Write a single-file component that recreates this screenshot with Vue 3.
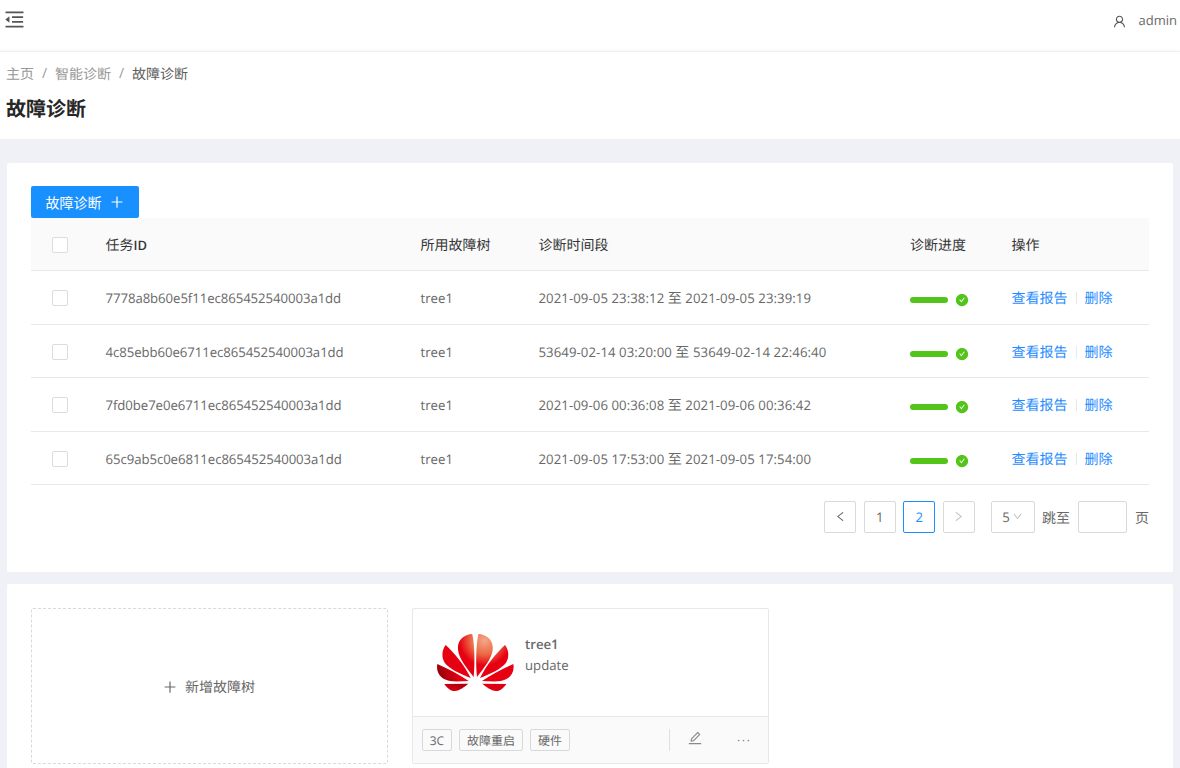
<script setup>
const icons = {
  fold: 'M408 442h480c4.4 0 8-3.6 8-8v-56c0-4.4-3.6-8-8-8H408c-4.4 0-8 3.6-8 8v56c0 4.4 3.6 8 8 8zm-8 204c0 4.4 3.6 8 8 8h480c4.4 0 8-3.6 8-8v-56c0-4.4-3.6-8-8-8H408c-4.4 0-8 3.6-8 8v56zm504-486H120c-4.4 0-8 3.6-8 8v56c0 4.4 3.6 8 8 8h784c4.4 0 8-3.6 8-8v-56c0-4.4-3.6-8-8-8zm0 632H120c-4.4 0-8 3.6-8 8v56c0 4.4 3.6 8 8 8h784c4.4 0 8-3.6 8-8v-56c0-4.4-3.6-8-8-8zM115.4 518.9L271.7 642c5.8 4.6 14.4.5 14.4-6.9V388.9c0-7.4-8.5-11.5-14.4-6.9L115.4 505.1a8.74 8.74 0 0 0 0 13.8z',
  user: 'M858.5 763.6a374 374 0 0 0-80.6-119.5 375.63 375.63 0 0 0-119.5-80.6c-.4-.2-.8-.3-1.2-.5C719.5 518 760 444.7 760 362c0-137-111-248-248-248S264 225 264 362c0 82.7 40.5 156 102.8 201.1-.4.2-.8.3-1.2.5-44.8 18.9-85 46-119.5 80.6a375.63 375.63 0 0 0-80.6 119.5A371.7 371.7 0 0 0 136 901.8a8 8 0 0 0 8 8.2h60c4.4 0 7.9-3.5 8-7.8 2-77.2 33-149.5 87.8-204.3 56.7-56.7 132-87.9 212.2-87.9s155.5 31.2 212.2 87.9C779 752.7 810 825 812 902.2c.1 4.4 3.6 7.8 8 7.8h60a8 8 0 0 0 8-8.2c-1-47.8-10.9-94.3-29.5-138.2zM512 534c-45.9 0-89.1-17.9-121.6-50.4S340 407.9 340 362c0-45.9 17.9-89.1 50.4-121.6S466.1 190 512 190s89.1 17.9 121.6 50.4S684 316.1 684 362c0 45.9-17.9 89.1-50.4 121.6S557.9 534 512 534z',
  left: 'M724 218.3V141c0-6.7-7.7-10.4-12.9-6.3L260.3 486.8a31.86 31.86 0 0 0 0 50.3l450.8 352.1c5.3 4.1 12.9.4 12.9-6.3v-77.3c0-4.9-2.3-9.6-6.1-12.6l-360-281 360-281.1c3.8-3 6.1-7.7 6.1-12.6z',
  right: 'M765.7 486.8L314.9 134.7A7.97 7.97 0 0 0 302 141v77.3c0 4.9 2.3 9.6 6.1 12.6l360 281.1-360 281.1c-3.9 3-6.1 7.7-6.1 12.6V883c0 6.7 7.7 10.4 12.9 6.3l450.8-352.1a31.96 31.96 0 0 0 0-50.4z',
  down: 'M884 256h-75c-5.1 0-9.9 2.5-12.9 6.6L512 654.2 227.9 262.6c-3-4.1-7.8-6.6-12.9-6.6h-75c-6.5 0-10.3 7.4-6.5 12.7l352.6 486.1c12.8 17.6 39 17.6 51.7 0l352.6-486.1c3.9-5.3.1-12.7-6.4-12.7z',
  edit: 'M257.7 752c2 0 4-.2 6-.5L431.9 722c2-.4 3.9-1.3 5.3-2.8l423.9-423.9a9.96 9.96 0 0 0 0-14.1L694.9 114.9c-1.9-1.9-4.4-2.9-7.1-2.9s-5.2 1-7.1 2.9L256.8 538.8c-1.5 1.5-2.4 3.3-2.8 5.3l-29.5 168.2a33.5 33.5 0 0 0 9.4 29.8c6.6 6.4 14.9 9.9 23.8 9.9zm67.4-174.4L687.8 215l73.3 73.3-362.7 362.6-88.9 15.7 15.6-89zM880 836H144c-17.7 0-32 14.3-32 32v36c0 4.4 3.6 8 8 8h784c4.4 0 8-3.6 8-8v-36c0-17.7-14.3-32-32-32z',
  check: 'M512 64C264.6 64 64 264.6 64 512s200.6 448 448 448 448-200.6 448-448S759.4 64 512 64zm193.5 301.7l-210.6 292a31.8 31.8 0 0 1-51.7 0L318.5 484.9c-3.8-5.3 0-12.7 6.5-12.7h46.9c10.2 0 19.9 4.9 25.9 13.3l71.2 98.8 157.2-218c6-8.3 15.6-13.3 25.9-13.3H699c6.5 0 10.3 7.4 6.5 12.7z',
  plus: 'M482 152h60q8 0 8 8v704q0 8-8 8h-60q-8 0-8-8V160q0-8 8-8zM176 474h672q8 0 8 8v60q0 8-8 8H176q-8 0-8-8v-60q0-8 8-8z',
}
const rows = [
  { id: '7778a8b60e5f11ec865452540003a1dd', from: '2021-09-05 23:38:12', to: '2021-09-05 23:39:19' },
  { id: '4c85ebb60e6711ec865452540003a1dd', from: '53649-02-14 03:20:00', to: '53649-02-14 22:46:40' },
  { id: '7fd0be7e0e6711ec865452540003a1dd', from: '2021-09-06 00:36:08', to: '2021-09-06 00:36:42' },
  { id: '65c9ab5c0e6811ec865452540003a1dd', from: '2021-09-05 17:53:00', to: '2021-09-05 17:54:00' },
]
</script>

<template>
  <div class="page">
    <header class="top">
      <svg class="fold" viewBox="0 0 1024 1024"><path :d="icons.fold" /></svg>
      <div class="account">
        <svg viewBox="0 0 1024 1024"><path :d="icons.user" /></svg>
        <span class="lat">admin</span>
      </div>
    </header>
    <section class="heading">
      <nav class="crumbs">
        <span>主页</span><i>/</i><span>智能诊断</span><i>/</i><span class="current">故障诊断</span>
      </nav>
      <h1>故障诊断</h1>
    </section>

    <main class="content">
      <section class="panel tasks">
        <button class="primary">故障诊断<svg viewBox="0 0 1024 1024"><path :d="icons.plus" /></svg></button>
        <div class="row head">
          <div class="check"><span class="box"></span></div>
          <div>任务<b class="id">ID</b></div>
          <div>所用故障树</div>
          <div>诊断时间段</div>
          <div>诊断进度</div>
          <div>操作</div>
        </div>
        <div v-for="r in rows" :key="r.id" class="row">
          <div class="check"><span class="box"></span></div>
          <div class="lat hash">{{ r.id }}</div>
          <div class="lat">tree1</div>
          <div class="lat time">{{ r.from }} <span class="zh">至</span> {{ r.to }}</div>
          <div class="progress"><span class="bar"></span><svg viewBox="0 0 1024 1024"><path :d="icons.check" /></svg></div>
          <div class="actions"><a>查看报告</a><span class="sep"></span><a>删除</a></div>
        </div>
        <div class="pager">
          <span class="pg"><svg viewBox="0 0 1024 1024"><path :d="icons.left" /></svg></span>
          <span class="pg lat">1</span>
          <span class="pg lat active">2</span>
          <span class="pg off"><svg viewBox="0 0 1024 1024"><path :d="icons.right" /></svg></span>
          <span class="pg size lat">5<svg viewBox="0 0 1024 1024"><path :d="icons.down" /></svg></span>
          <span class="jump">跳至</span>
          <span class="pg field"></span>
          <span class="jump">页</span>
        </div>
      </section>

      <section class="panel trees">
        <div class="add"><svg viewBox="0 0 1024 1024"><path :d="icons.plus" /></svg>新增故障树</div>
        <article class="card">
          <div class="body">
            <svg class="logo" viewBox="0 0 270 225">
              <defs>
                <radialGradient id="petals" gradientUnits="userSpaceOnUse" cx="164" cy="46" r="76">
                  <stop offset="0" stop-color="#f3a888" />
                  <stop offset=".55" stop-color="#ec6a45" />
                  <stop offset="1" stop-color="#e60012" />
                </radialGradient>
                <linearGradient id="shade" gradientUnits="userSpaceOnUse" x1="25" y1="160" x2="80" y2="135">
                  <stop offset="0" stop-color="#8f0006" />
                  <stop offset="1" stop-color="#e60012" />
                </linearGradient>
                <linearGradient id="base" gradientUnits="userSpaceOnUse" x1="70" y1="205" x2="85" y2="170">
                  <stop offset="0" stop-color="#e00012" />
                  <stop offset="1" stop-color="#a8000a" />
                </linearGradient>
              </defs>
              <path fill="url(#petals)" d="M131 156C135 120 134 60 127 28Q124 25 114 29C93 37 82 50 84 74C87 102 112 130 131 156Z" />
              <path fill="url(#petals)" d="M141 156C137 120 138 60 145 28Q148 25 158 29C179 37 190 50 188 74C185 102 160 130 141 156Z" />
              <path fill="#e60012" d="M122 159C104 122 74 85 47 60C35 76 34 97 44 113C57 131 92 147 122 159Z" />
              <path fill="url(#petals)" d="M150 159C168 122 198 85 225 60C237 76 238 97 228 113C215 131 180 147 150 159Z" />
              <path fill="url(#shade)" d="M116 168C87 148 54 132 22 117C18 138 28 155 44 163C61 172 88 169 116 168Z" />
              <path fill="#e60012" d="M156 168C185 148 218 132 250 117C254 138 244 155 228 163C211 172 184 169 156 168Z" />
              <path fill="url(#base)" d="M115 176L43 177C51 190 64 199 74 198C90 196 103 186 115 176Z" />
              <path fill="#dd0012" d="M157 176L229 177C221 190 208 199 198 198C182 196 169 186 157 176Z" />
            </svg>
            <div class="desc"><b class="lat">tree1</b><span class="lat">update</span></div>
          </div>
          <footer>
            <span class="tag three">3C</span><span class="tag">故障重启</span><span class="tag">硬件</span>
            <span class="rule"></span>
            <svg class="edit" viewBox="0 0 1024 1024"><path :d="icons.edit" /></svg>
            <svg class="more" viewBox="0 0 1024 1024"><circle cx="130" cy="512" r="66" /><circle cx="512" cy="512" r="66" /><circle cx="894" cy="512" r="66" /></svg>
          </footer>
        </article>
      </section>
    </main>
  </div>
</template>

<style>
html, body { margin: 0; overflow: hidden; background: #f0f2f5; }
</style>

<style scoped>
* { box-sizing: border-box; }
.page {
  height: 768px; overflow: hidden; background: #eff1f6; color: #686868;
  font: 14px/22px "Noto Sans CJK SC", sans-serif; text-rendering: geometricPrecision;
}
svg { display: block; fill: currentColor; flex: none; }
.lat { font-family: "Open Sans", "Noto Sans CJK SC", sans-serif; font-size: 13.2px; }
.hash { letter-spacing: -0.07px; }
.time { letter-spacing: 0.07px; }
.zh { font-size: 14px; font-family: "Noto Sans CJK SC", sans-serif; }
.top { height: 51px; background: #fff; display: flex; justify-content: space-between; padding: 8px 3px 0 3px; }
.fold { width: 23px; height: 23px; color: #555; }
.account { display: flex; height: 22px; align-items: center; gap: 12px; padding-top: 2px; }
.account .lat { font-size: 13px; }
.account svg { width: 15px; height: 15px; margin-top: 3px; color: #555; }
.heading { height: 88px; background: #fff; border-top: 1px solid #f0f0f0; box-shadow: 0 -1px 3px #0000000a; padding: 11px 6px 0; }
.crumbs { display: flex; color: #999; }
.crumbs i { font: 14px/22px "Open Sans", sans-serif; width: 21px; text-align: center; }
.crumbs .current { color: #5e5e5e; }
h1 { margin: 8px 0 0; font-size: 20px; line-height: 30px; font-weight: 700; color: #262626; }
.content { padding: 24px 7px 0; display: flex; flex-direction: column; gap: 12px; }
.panel { background: #fff; border-radius: 2px; padding: 24px 24px 0 23.5px; }
.tasks { height: 409px; padding-top: 23px; }
.primary {
  display: flex; align-items: center; gap: 7px; height: 32px; width: 108.5px; padding: 0 0 0 15px; border: 0;
  border-radius: 2px; background: #1890ff; color: #fff; font: inherit;
}
.primary svg { width: 16px; height: 16px; }
.row {
  display: grid; grid-template-columns: 75px 315px 118px 371.5px 101.5px 1fr; height: 53.5px;
  align-items: center; border-bottom: 1px solid #e8e8e8; padding-top: 1px;
}
.row.head { height: 53.3px; background: #fafafa; color: #363636; }
.id { font: 600 13px/22px "Open Sans", sans-serif; }
.check { padding-left: 21.5px; }
.box { display: block; width: 16px; height: 16px; border: 1px solid #dcdcdc; border-radius: 2px; background: #fff; }
.progress { display: flex; align-items: center; gap: 7px; padding-top: 4px; }
.bar { width: 38px; height: 6px; border-radius: 3px; background: #52c41a; }
.progress svg { width: 14px; height: 14px; color: #52c41a; }
.actions { display: flex; align-items: center; color: #1f8cff; }
.sep { width: 1px; height: 12px; margin: 0 8px; background: #e8e8e8; }
.pager { display: flex; justify-content: flex-end; margin-top: 15.7px; height: 32px; line-height: 34px; }
.pg {
  width: 32px; height: 32px; border: 1px solid #d9d9d9; border-radius: 2px; display: flex; line-height: 30px;
  align-items: center; justify-content: center; margin-right: 7.6px;
}
.pg svg { width: 13px; height: 13px; }
.active { border-color: #1890ff; color: #1890ff; }
.off { color: #bfbfbf; }
.pg.size { width: 44px; margin-left: 8px; margin-right: 7.5px; }
.pg.size svg { width: 11px; height: 11px; color: #bfbfbf; margin-left: 2px; }
.pg.field { width: 49px; margin-left: 8px; margin-right: 8px; }
.trees { height: 200px; display: flex; gap: 24px; align-items: flex-start; }
.add {
  width: 357px; height: 156px; border: 1px dashed #d9d9d9; border-radius: 2px; display: flex;
  align-items: center; justify-content: center; gap: 7px; padding: 1px 1px 0 0;
}
.add svg { width: 16px; height: 16px; }
.card { width: 357px; height: 156px; border: 1px solid #e8e8e8; border-radius: 2px; display: flex; flex-direction: column; }
.body { height: 107px; display: flex; padding: 16px 0 0 17.5px; }
.logo { width: 90px; height: 75px; }
.desc { display: flex; flex-direction: column; line-height: 21px; padding: 9px 0 0 5px; }
.desc b { font-weight: 600; }
footer { flex: 1; border-top: 1px solid #e8e8e8; background: #fafafa; display: flex; align-items: center; padding: 0 17.5px 0 9.5px; color: #8a8a8a; }
.tag {
  height: 22px; line-height: 21px; padding: 0 6.7px; border: 1px solid #d9d9d9; border-radius: 2px;
  background: #fafafa; color: #686868; font-size: 12px; margin-right: 7.5px;
}
.tag.three { font-family: "Open Sans", sans-serif; }
.rule { width: 1px; height: 22px; background: #e0e0e0; margin-left: auto; margin-right: 17px; }
.edit { width: 16px; height: 16px; margin: -4px 34.5px 0 0; }
.more { width: 13px; height: 13px; }
</style>
